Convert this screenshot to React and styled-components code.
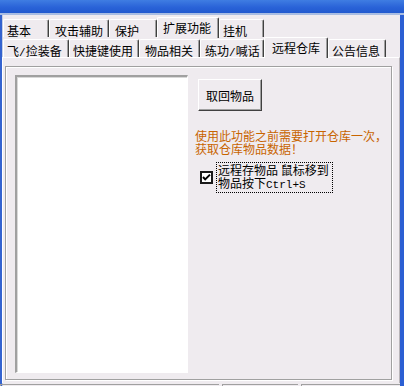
import React from 'react'
import styled, { createGlobalStyle } from 'styled-components'

const GlobalStyle = createGlobalStyle`
  html, body {
    margin: 0;
    padding: 0;
    overflow: hidden;
    background: #efebef;
  }
  body {
    font-family: "Noto Sans CJK SC", "Liberation Sans", sans-serif;
    font-size: 12px;
    color: #000;
  }
`

const Window = styled.div`
  width: 404px;
  height: 386px;
  overflow: hidden;
  display: flex;
  flex-direction: column;
  background: #efebef;
`

const TitleBar = styled.div`
  height: 13px;
  flex: none;
  background: linear-gradient(#3f7de2, #2a63d8 55%, #2159cf);
  border-bottom: 2px solid #a9bde2;
`

const Frame = styled.div`
  flex: 1;
  display: flex;
  flex-direction: column;
  padding-top: 2px;
  border-left: 2px solid #3463cf;
  border-right: 4px solid #2b5fd3;
  box-shadow: inset 1px 0 0 #c6cfe4;
`

const TabRow = styled.div`
  display: flex;
  align-items: flex-end;
  height: 20px;
  padding-left: 1px;
  position: relative;
  z-index: ${p => p.$z};
`

const Tab = styled.div`
  box-sizing: border-box;
  width: ${p => p.$w}px;
  height: ${p => (p.$active ? 21 : 18)}px;
  padding-left: ${p => p.$pad}px;
  padding-top: ${p => (p.$active ? 3 : 4)}px;
  line-height: 13px;
  white-space: nowrap;
  background: #efebef;
  border-top: 1px solid #fff;
  border-left: 1px solid #fff;
  border-right: 1px solid #404040;
  box-shadow: inset -1px 0 0 #a0a0a0;
  border-top-left-radius: 2px;
  border-top-right-radius: 2px;
  margin-bottom: ${p => (p.$active ? -1 : 0)}px;
  position: relative;
  z-index: ${p => (p.$active ? 2 : 1)};
`

const Ascii = styled.span`
  font-family: "Liberation Mono", "DejaVu Sans Mono", monospace;
  font-size: 11px;
`

const TabBody = styled.div`
  flex: none;
  box-sizing: border-box;
  height: 326px;
  width: 398px;
  border-top: 1px solid #fff;
  border-left: 1px solid #fff;
  border-right: 1px solid #b8b4b8;
  padding: 8px 0 0 2px;
`

const Panel = styled.div`
  box-sizing: border-box;
  width: 387px;
  height: 314px;
  border: 1px solid #a0a0a0;
  box-shadow: 1px 1px 0 #fff, inset 1px 1px 0 #fff;
  display: flex;
  gap: 7px;
  padding: 8px 0 0 9px;
`

const ListBox = styled.div`
  box-sizing: border-box;
  flex: none;
  width: 173px;
  height: 298px;
  background: #fff;
  border-top: 2px solid #a0a0a0;
  border-left: 2px solid #a0a0a0;
  border-right: 1px solid #fff;
  border-bottom: 1px solid #fff;
  box-shadow: inset 1px 1px 0 #d8d8d8;
`

const Side = styled.div`
  display: flex;
  flex-direction: column;
  align-items: flex-start;
  padding-top: 4px;
`

const Button = styled.div`
  box-sizing: border-box;
  width: 64px;
  height: 32px;
  margin-left: 3px;
  display: flex;
  align-items: center;
  justify-content: center;
  background: #efebef;
  border-top: 1px solid #fff;
  border-left: 1px solid #fff;
  border-right: 1px solid #404040;
  border-bottom: 1px solid #404040;
  box-shadow: inset -1px -1px 0 #a0a0a0;
`

const Note = styled.div`
  margin-top: 18px;
  color: #c86400;
  line-height: 13px;
  white-space: nowrap;
`

const CheckRow = styled.div`
  display: flex;
  align-items: center;
  margin-top: 7px;
  margin-left: 5px;
  gap: 3px;
`

const Box = styled.svg`
  flex: none;
  display: block;
`

const CheckLabel = styled.div`
  border: 1px dotted #000;
  padding: 0 3px 0 1px;
  line-height: 13px;
  white-space: nowrap;
`

const StatusBar = styled.div`
  display: flex;
  gap: 3px;
  height: 20px;
  margin-top: 1px;
  margin-left: -2px;
`

const StatusCell = styled.div`
  box-sizing: border-box;
  width: ${p => p.$w}px;
  border-top: 1px solid #a0a0a0;
  border-left: 1px solid #a0a0a0;
`

const topTabs = [
  { label: '基本', w: 46, pad: 3 },
  { label: '攻击辅助', w: 60, pad: 5 },
  { label: '保护', w: 48, pad: 5 },
  { label: '扩展功能', w: 62, pad: 5, active: true },
  { label: '挂机', w: 45, pad: 3 },
]

const bottomTabs = [
  { label: <>飞<Ascii>/</Ascii>捡装备</>, w: 66, pad: 3 },
  { label: '快捷键使用', w: 70, pad: 3 },
  { label: '物品相关', w: 61, pad: 5 },
  { label: <>练功<Ascii>/</Ascii>喊话</>, w: 64, pad: 4 },
  { label: '远程仓库', w: 64, pad: 7, active: true },
  { label: '公告信息', w: 58, pad: 3 },
]

const renderTabs = tabs => tabs.map((t, i) => (
  <Tab key={i} $w={t.w} $pad={t.pad} $active={t.active}>{t.label}</Tab>
))

export default function App() {
  return (
    <Window>
      <GlobalStyle />
      <TitleBar />
      <Frame>
        <TabRow $z={1}>{renderTabs(topTabs)}</TabRow>
        <TabRow $z={2}>{renderTabs(bottomTabs)}</TabRow>
        <TabBody>
          <Panel>
            <ListBox />
            <Side>
              <Button>取回物品</Button>
              <Note>
                使用此功能之前需要打开仓库一次，<br />
                获取仓库物品数据！
              </Note>
              <CheckRow>
                <Box width="13" height="13" viewBox="0 0 13 13">
                  <rect x="0.5" y="0.5" width="12" height="12" fill="#fff" stroke="#1a1a1a" />
                  <rect x="1.5" y="1.5" width="10" height="10" fill="none" stroke="#1a1a1a" />
                  <polyline points="3,6 5.2,8.4 10,3.6" fill="none" stroke="#000" strokeWidth="2" />
                </Box>
                <CheckLabel>
                  远程存物品 鼠标移到<br />
                  物品按下<Ascii>Ctrl+S</Ascii>
                </CheckLabel>
              </CheckRow>
            </Side>
          </Panel>
        </TabBody>
        <StatusBar>
          <StatusCell $w={221} />
          <StatusCell $w={77} />
          <StatusCell $w={100} />
        </StatusBar>
      </Frame>
    </Window>
  )
}
